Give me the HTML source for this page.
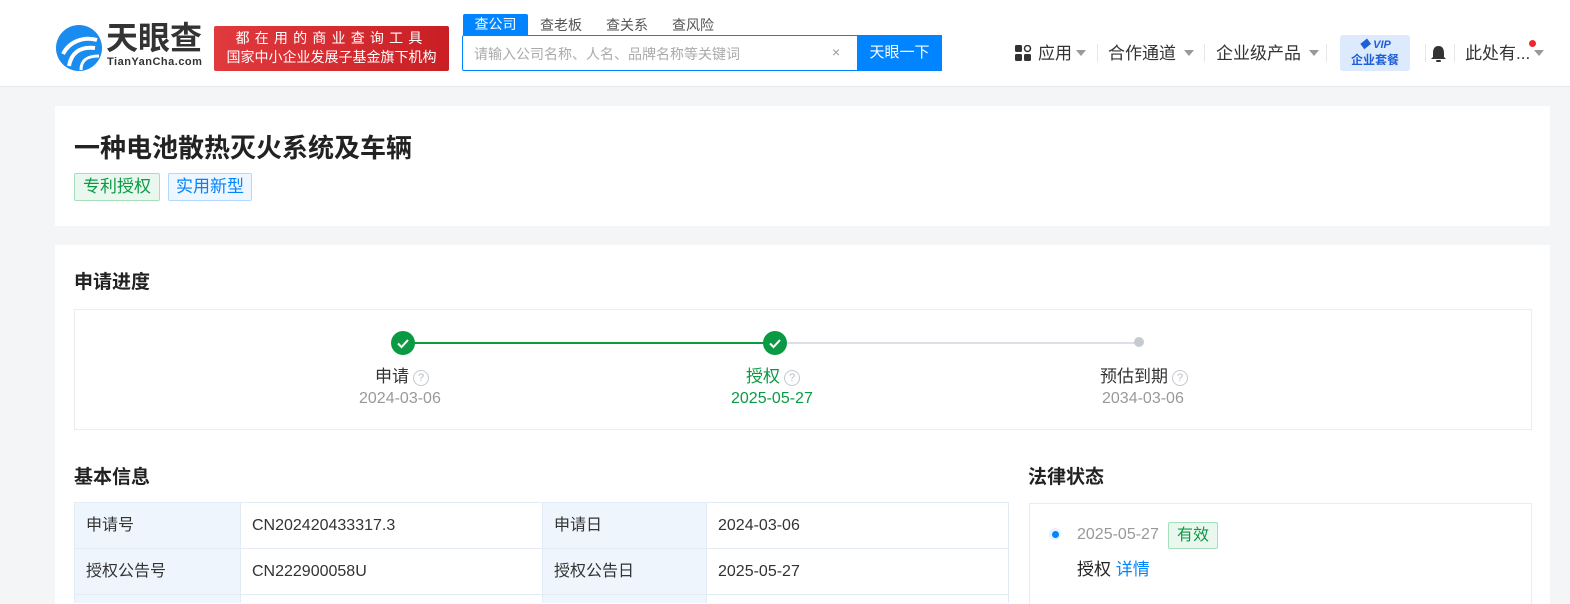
<!DOCTYPE html>
<html><head><meta charset="utf-8"><style>
*{margin:0;padding:0;box-sizing:border-box}
html,body{width:1570px;height:604px;overflow:hidden}
body{background:#f4f5f7;font-family:"Liberation Sans","Noto Sans CJK SC",sans-serif;color:#333;position:relative}
.a{position:absolute;white-space:nowrap}
.hdr{position:absolute;left:0;top:0;width:1570px;height:87px;background:#fff;border-bottom:1px solid #e8e8e8}
.card{position:absolute;background:#fff}
.q{display:inline-block;width:16px;height:16px;border:1px solid #c4c8d0;border-radius:50%;color:#b8bcc4;font-size:11px;line-height:14px;text-align:center;vertical-align:1px;margin-left:4px}
.chk{position:absolute;width:24px;height:24px;border-radius:50%;background:#0b9a44}
table{border-collapse:collapse;position:absolute;left:74px;top:502px;font-size:16px}
td{border:1px solid #e3ecf5;height:46px;padding:0 0 0 11px;color:#333;line-height:20px;vertical-align:middle}
td.l{background:#eef5fc}
tr.last td{height:8px;border-bottom:none}
.sep{position:absolute;top:44px;width:1px;height:18px;background:#e6e6e6}
.tri{display:inline-block;width:0;height:0;border-left:5px solid transparent;border-right:5px solid transparent;border-top:6px solid #999;vertical-align:3px;margin-left:6px}
.nav{position:absolute;top:43px;font-size:17px;color:#333;white-space:nowrap;line-height:22px}
</style></head><body>
<div class="hdr">
 <svg class="a" style="left:55px;top:24px" width="48" height="48" viewBox="0 0 48 48">
  <circle cx="24" cy="24" r="23" fill="#1a8cf0"/>
  <path d="M8 30 C14 18 28 12 42 16" stroke="#fff" stroke-width="4" fill="none"/>
  <path d="M14 42 C16 30 24 22 40 24" stroke="#fff" stroke-width="4" fill="none"/>
  <path d="M26 46 C26 36 32 32 44 32" stroke="#fff" stroke-width="3" fill="none"/>
 </svg>
 <div class="a" style="left:106px;top:21px;font-size:32px;font-weight:bold;color:#333;line-height:34px">天眼查</div>
 <div class="a" style="left:107px;top:56px;font-size:11px;color:#333;letter-spacing:0.5px;font-weight:bold">TianYanCha.com</div>
 <div class="a" style="left:214px;top:26px;width:235px;height:45px;background:linear-gradient(90deg,#e03a3e,#c91f24);border-radius:2px;color:#fff;text-align:center">
  <div style="font-size:14px;letter-spacing:5.2px;line-height:20px;margin-top:2px">都在用的商业查询工具</div>
  <div style="font-size:14px;line-height:19px">国家中小企业发展子基金旗下机构</div>
 </div>
 <div class="a" style="left:463px;top:14px;width:65px;height:21px;background:#0084ff;color:#fff;font-size:14px;text-align:center;line-height:20px;border-radius:2px 2px 0 0">查公司</div>
 <div class="a" style="left:540px;top:15px;font-size:14px;color:#555">查老板</div>
 <div class="a" style="left:606px;top:15px;font-size:14px;color:#555">查关系</div>
 <div class="a" style="left:672px;top:15px;font-size:14px;color:#555">查风险</div>
 <div class="a" style="left:462px;top:35px;width:480px;height:36px;border:1px solid #0084ff;border-radius:2px;background:#fff"></div>
 <div class="a" style="left:474px;top:44px;font-size:14px;color:#aaa">请输入公司名称、人名、品牌名称等关键词</div>
 <div class="a" style="left:832px;top:44px;font-size:14px;color:#999">×</div>
 <div class="a" style="left:857px;top:35px;width:85px;height:36px;background:#0084ff;color:#fff;font-size:15px;text-align:center;line-height:36px">天眼一下</div>
 <svg class="a" style="left:1015px;top:45px" width="17" height="17"><rect x="0" y="0" width="7" height="7" rx="1.5" fill="#333"/><rect x="0" y="9" width="7" height="7" rx="1.5" fill="#333"/><rect x="9" y="9" width="7" height="7" rx="1.5" fill="#333"/><circle cx="12.5" cy="3.5" r="3" fill="none" stroke="#333" stroke-width="1.5"/></svg>
 <div class="nav" style="left:1038px">应用<span class="tri" style="margin-left:4px"></span></div>
 <div class="sep" style="left:1097px"></div>
 <div class="nav" style="left:1108px">合作通道<span class="tri" style="margin-left:8px"></span></div>
 <div class="sep" style="left:1204px"></div>
 <div class="nav" style="left:1216px">企业级产品<span class="tri" style="margin-left:8px"></span></div>
 <div class="sep" style="left:1326px"></div>
 <div class="a" style="left:1340px;top:35px;width:70px;height:36px;background:#dde9fc;border-radius:3px;color:#1d5fd6;text-align:center;font-weight:bold">
  <div style="font-size:11px;line-height:14px;margin-top:3px;font-style:italic">◆ VIP</div>
  <div style="font-size:12px;line-height:16px">企业套餐</div>
 </div>
 <div class="sep" style="left:1425px"></div>
 <svg class="a" style="left:1430px;top:45px" width="17" height="18"><path d="M8.5 1 C4.5 1 3 4 3 8 L3 12 L1 14 L16 14 L14 12 L14 8 C14 4 12.5 1 8.5 1Z" fill="#333"/><rect x="6" y="15" width="5" height="2" rx="1" fill="#333"/></svg>
 <div class="sep" style="left:1454px"></div>
 <div class="nav" style="left:1465px">此处有...<span class="tri" style="margin-left:4px"></span></div>
 <div class="a" style="left:1529px;top:40px;width:7px;height:7px;border-radius:50%;background:#f0282d"></div>
</div>

<div class="card" style="left:55px;top:106px;width:1495px;height:120px"></div>
<div class="a" style="left:74px;top:131px;font-size:26px;font-weight:bold;color:#222;line-height:34px">一种电池散热灭火系统及车辆</div>
<div class="a" style="left:74px;top:173px;height:28px;padding:0 8px;border:1px solid #a5dfbb;background:#eaf7ef;color:#0b9a44;font-size:17px;line-height:26px;border-radius:2px">专利授权</div>
<div class="a" style="left:168px;top:173px;height:28px;padding:0 7px;border:1px solid #b3d8ff;background:#eef6ff;color:#0084ff;font-size:17px;line-height:26px;border-radius:2px">实用新型</div>

<div class="card" style="left:55px;top:245px;width:1495px;height:359px"></div>
<div class="a" style="left:74px;top:267px;font-size:19px;font-weight:bold;color:#222">申请进度</div>
<div class="a" style="left:74px;top:309px;width:1458px;height:121px;border:1px solid #ececec"></div>
<div class="a" style="left:403px;top:342px;width:372px;height:2px;background:#0b9a44"></div>
<div class="a" style="left:775px;top:342px;width:364px;height:2px;background:#dcdfe6"></div>
<div class="chk" style="left:391px;top:331px"></div>
<div class="chk" style="left:763px;top:331px"></div>
<svg class="a" style="left:391px;top:331px" width="24" height="24"><path d="M7 12.5 L10.5 16 L17 9" stroke="#fff" stroke-width="2" fill="none"/></svg>
<svg class="a" style="left:763px;top:331px" width="24" height="24"><path d="M7 12.5 L10.5 16 L17 9" stroke="#fff" stroke-width="2" fill="none"/></svg>
<div class="a" style="left:1134px;top:337px;width:10px;height:10px;border-radius:50%;background:#c8cad2"></div>
<div class="a" style="left:375px;top:365px;font-size:17px;color:#333;line-height:24px">申请<span class="q">?</span></div>
<div class="a" style="left:359px;top:390px;font-size:16px;color:#999">2024-03-06</div>
<div class="a" style="left:746px;top:365px;font-size:17px;color:#0b9a44;line-height:24px">授权<span class="q">?</span></div>
<div class="a" style="left:731px;top:390px;font-size:16px;color:#0b9a44">2025-05-27</div>
<div class="a" style="left:1100px;top:365px;font-size:17px;color:#333;line-height:24px">预估到期<span class="q">?</span></div>
<div class="a" style="left:1102px;top:390px;font-size:16px;color:#999">2034-03-06</div>

<div class="a" style="left:74px;top:462px;font-size:19px;font-weight:bold;color:#222">基本信息</div>
<table>
<tr><td class="l" style="width:166px">申请号</td><td style="width:302px">CN202420433317.3</td><td class="l" style="width:164px">申请日</td><td style="width:302px">2024-03-06</td></tr>
<tr><td class="l">授权公告号</td><td>CN222900058U</td><td class="l">授权公告日</td><td>2025-05-27</td></tr>
<tr class="last"><td class="l"></td><td></td><td class="l"></td><td></td></tr>
</table>

<div class="a" style="left:1028px;top:462px;font-size:19px;font-weight:bold;color:#222">法律状态</div>
<div class="a" style="left:1029px;top:503px;width:503px;height:101px;border:1px solid #ececec;border-bottom:none"></div>
<div class="a" style="left:1049px;top:528px;width:12px;height:12px;border-radius:50%;background:#e6f1ff"></div>
<div class="a" style="left:1052px;top:531px;width:7px;height:7px;border-radius:50%;background:#0084ff"></div>
<div class="a" style="left:1077px;top:526px;font-size:16px;color:#999">2025-05-27</div>
<div class="a" style="left:1168px;top:522px;height:27px;padding:0 8px;border:1px solid #a5dfbb;background:#eaf7ef;color:#0b9a44;font-size:16px;line-height:25px;border-radius:2px">有效</div>
<div class="a" style="left:1077px;top:555px;font-size:17px;color:#222">授权 <span style="color:#0084ff">详情</span></div>
</body></html>
